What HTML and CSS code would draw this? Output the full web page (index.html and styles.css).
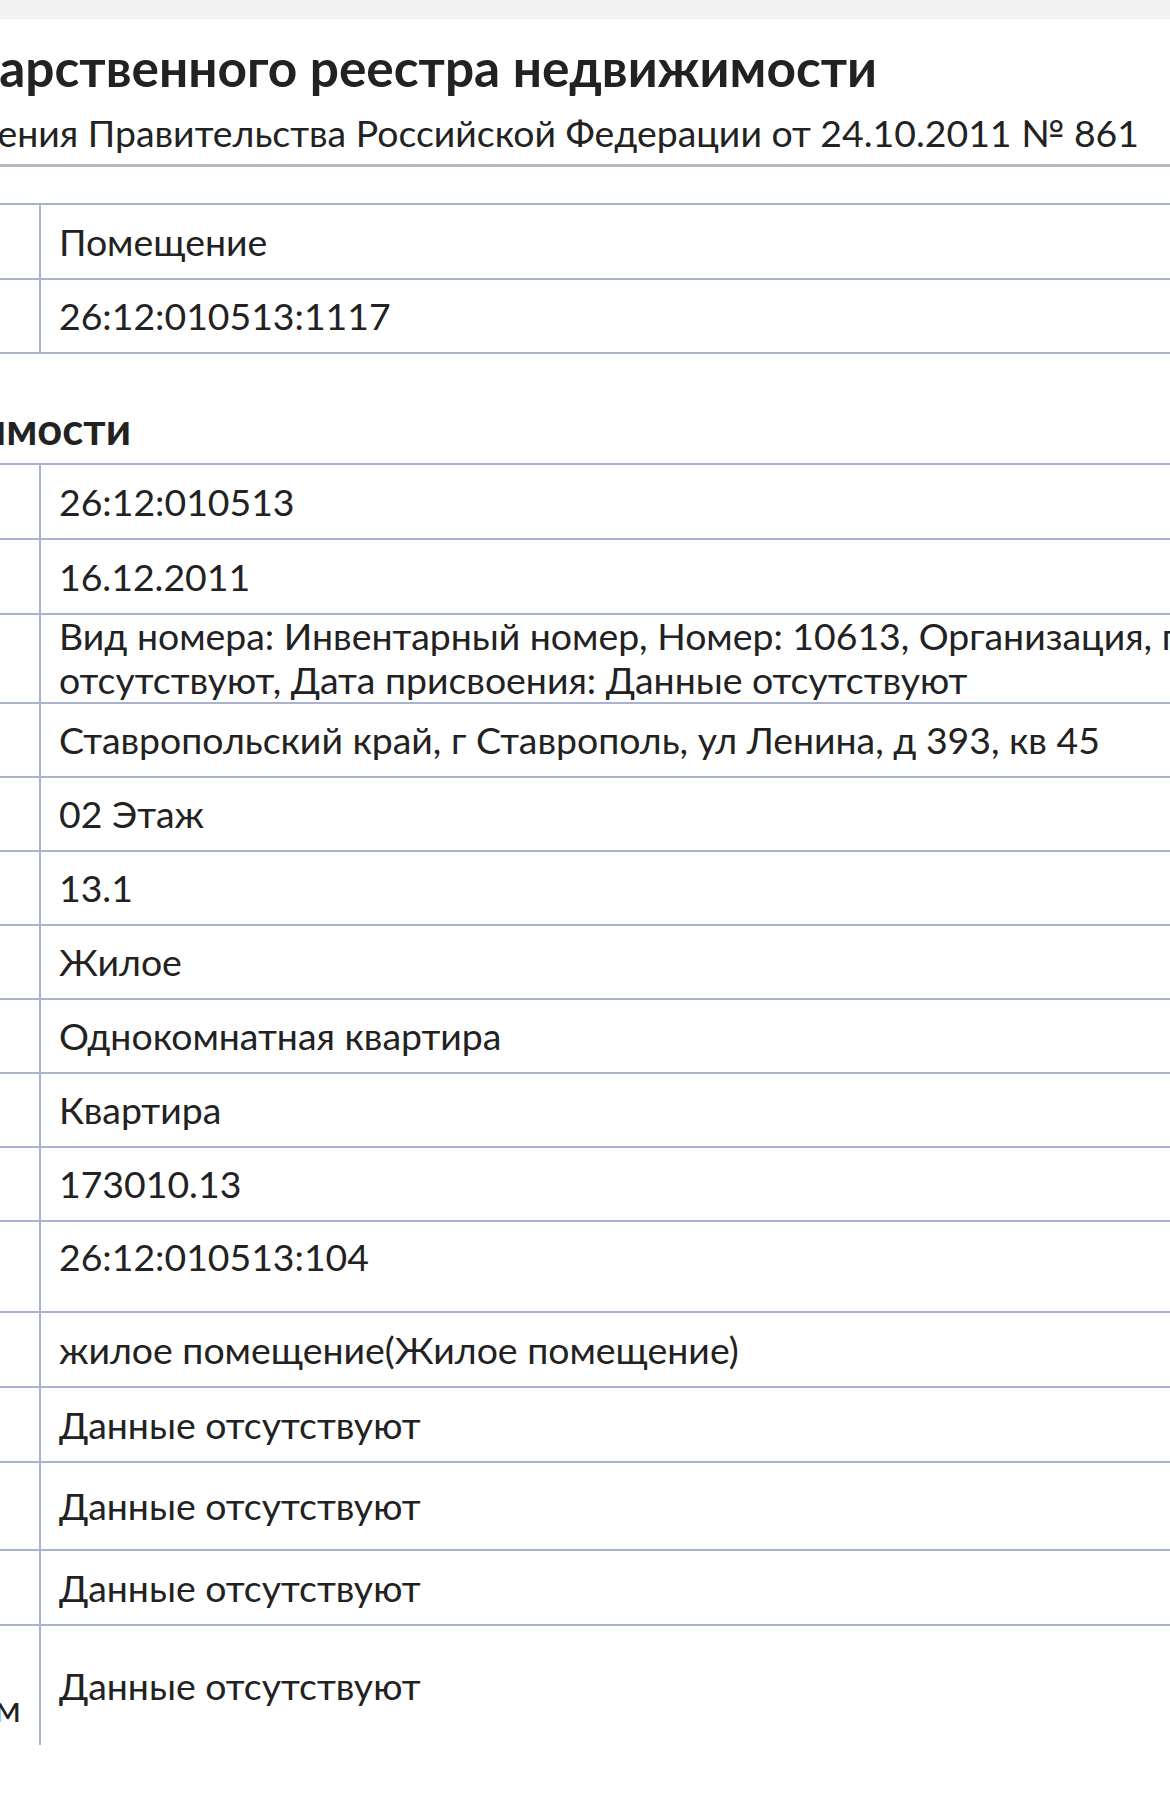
FILE: index.html
```html
<!DOCTYPE html>
<html lang="ru">
<head>
<meta charset="utf-8">
<title>Выписка из ЕГРН</title>
<link rel="stylesheet" href="styles.css">
</head>
<body>
<div class="topbar"></div>
<main class="doc">
  <header class="doc-head">
    <div class="line-end title-wrap"><h1 class="title">Выписка из Единого государственного реестра недвижимости</h1></div>
    <div class="line-end subtitle-wrap"><p class="subtitle">Сведения предоставлены на основании постановления Правительства Российской Федерации от 24.10.2011 № 861</p></div>
  </header>

  <section class="grid grid-first">
    <div class="row h75"><div class="label"></div><div class="value">Помещение</div></div>
    <div class="row"><div class="label"></div><div class="value">26:12:010513:1117</div></div>
  </section>

  <div class="line-end section-wrap"><h2 class="section-title">Характеристики объекта недвижимости</h2></div>

  <section class="grid">
    <div class="row h75"><div class="label"></div><div class="value">26:12:010513</div></div>
    <div class="row h75"><div class="label"></div><div class="value">16.12.2011</div></div>
    <div class="row h89"><div class="label"></div><div class="value value-two">Вид номера: Инвентарный номер, Номер: 10613, Организация, присвоившая номер: Данные<br>отсутствуют, Дата присвоения: Данные отсутствуют</div></div>
    <div class="row"><div class="label"></div><div class="value">Ставропольский край, г Ставрополь, ул Ленина, д 393, кв 45</div></div>
    <div class="row"><div class="label"></div><div class="value">02 Этаж</div></div>
    <div class="row"><div class="label"></div><div class="value">13.1</div></div>
    <div class="row"><div class="label"></div><div class="value">Жилое</div></div>
    <div class="row"><div class="label"></div><div class="value">Однокомнатная квартира</div></div>
    <div class="row"><div class="label"></div><div class="value">Квартира</div></div>
    <div class="row"><div class="label"></div><div class="value">173010.13</div></div>
    <div class="row h91"><div class="label"></div><div class="value value-high">26:12:010513:104</div></div>
    <div class="row h75"><div class="label"></div><div class="value">жилое помещение(Жилое помещение)</div></div>
    <div class="row h75"><div class="label"></div><div class="value">Данные отсутствуют</div></div>
    <div class="row h88"><div class="label"></div><div class="value">Данные отсутствуют</div></div>
    <div class="row h75"><div class="label"></div><div class="value">Данные отсутствуют</div></div>
    <div class="row h121 last"><div class="label label-tail">м</div><div class="value">Данные отсутствуют</div></div>
  </section>
</main>
</body>
</html>
```

FILE: styles.css
```css
* {
  box-sizing: border-box;
  margin: 0;
  padding: 0;
}

html,
body {
  background: #ffffff;
}

body {
  width: 1170px;
  height: 1810px;
  overflow: hidden;
  font-family: Lato, "Noto Sans", sans-serif;
  color: #222222;
}

.topbar {
  height: 19px;
  background: #f2f2f2;
}

.doc {
  overflow: hidden;
}

.line-end {
  display: flex;
  justify-content: flex-end;
  white-space: nowrap;
}

.title-wrap {
  margin-top: 18px;
  padding-right: 293px;
}

.title {
  font-size: 51.4px;
  line-height: 61px;
  font-weight: 700;
  flex: none;
}

.subtitle-wrap {
  margin-top: 13px;
  padding-right: 31px;
  padding-bottom: 9px;
  border-bottom: 3px solid #b4b8c3;
}

.subtitle {
  font-size: 37.4px;
  line-height: 44px;
  font-weight: 400;
  flex: none;
}

.grid {
  margin-top: 36px;
}

.grid-first {
  border-bottom: 2px solid #a9b2cf;
}

.section-wrap {
  margin-top: 48px;
  padding-right: 1039px;
}

.section-title {
  font-size: 43.5px;
  line-height: 52px;
  font-weight: 700;
  flex: none;
}

.section-wrap + .grid {
  margin-top: 9px;
}

.row {
  display: flex;
  height: 74px;
  border-top: 2px solid #a9b2cf;
}

.row.h75 { height: 75px; }
.row.h88 { height: 88px; }
.row.h89 { height: 89px; }
.row.h91 { height: 91px; }
.row.h121 { height: 121px; }

.label {
  flex: none;
  width: 41px;
  border-right: 2px solid #a9b2cf;
}

.value {
  flex: 1;
  display: flex;
  align-items: center;
  padding-left: 18px;
  font-size: 37.4px;
  line-height: 44px;
  white-space: nowrap;
}

.value-two {
  display: block;
  margin-top: -1px;
}

.value-high {
  padding-bottom: 20px;
}

.label-tail {
  display: flex;
  align-items: center;
  justify-content: flex-end;
  padding-right: 18px;
  padding-top: 44px;
  font-size: 37.4px;
  line-height: 44px;
}
```
